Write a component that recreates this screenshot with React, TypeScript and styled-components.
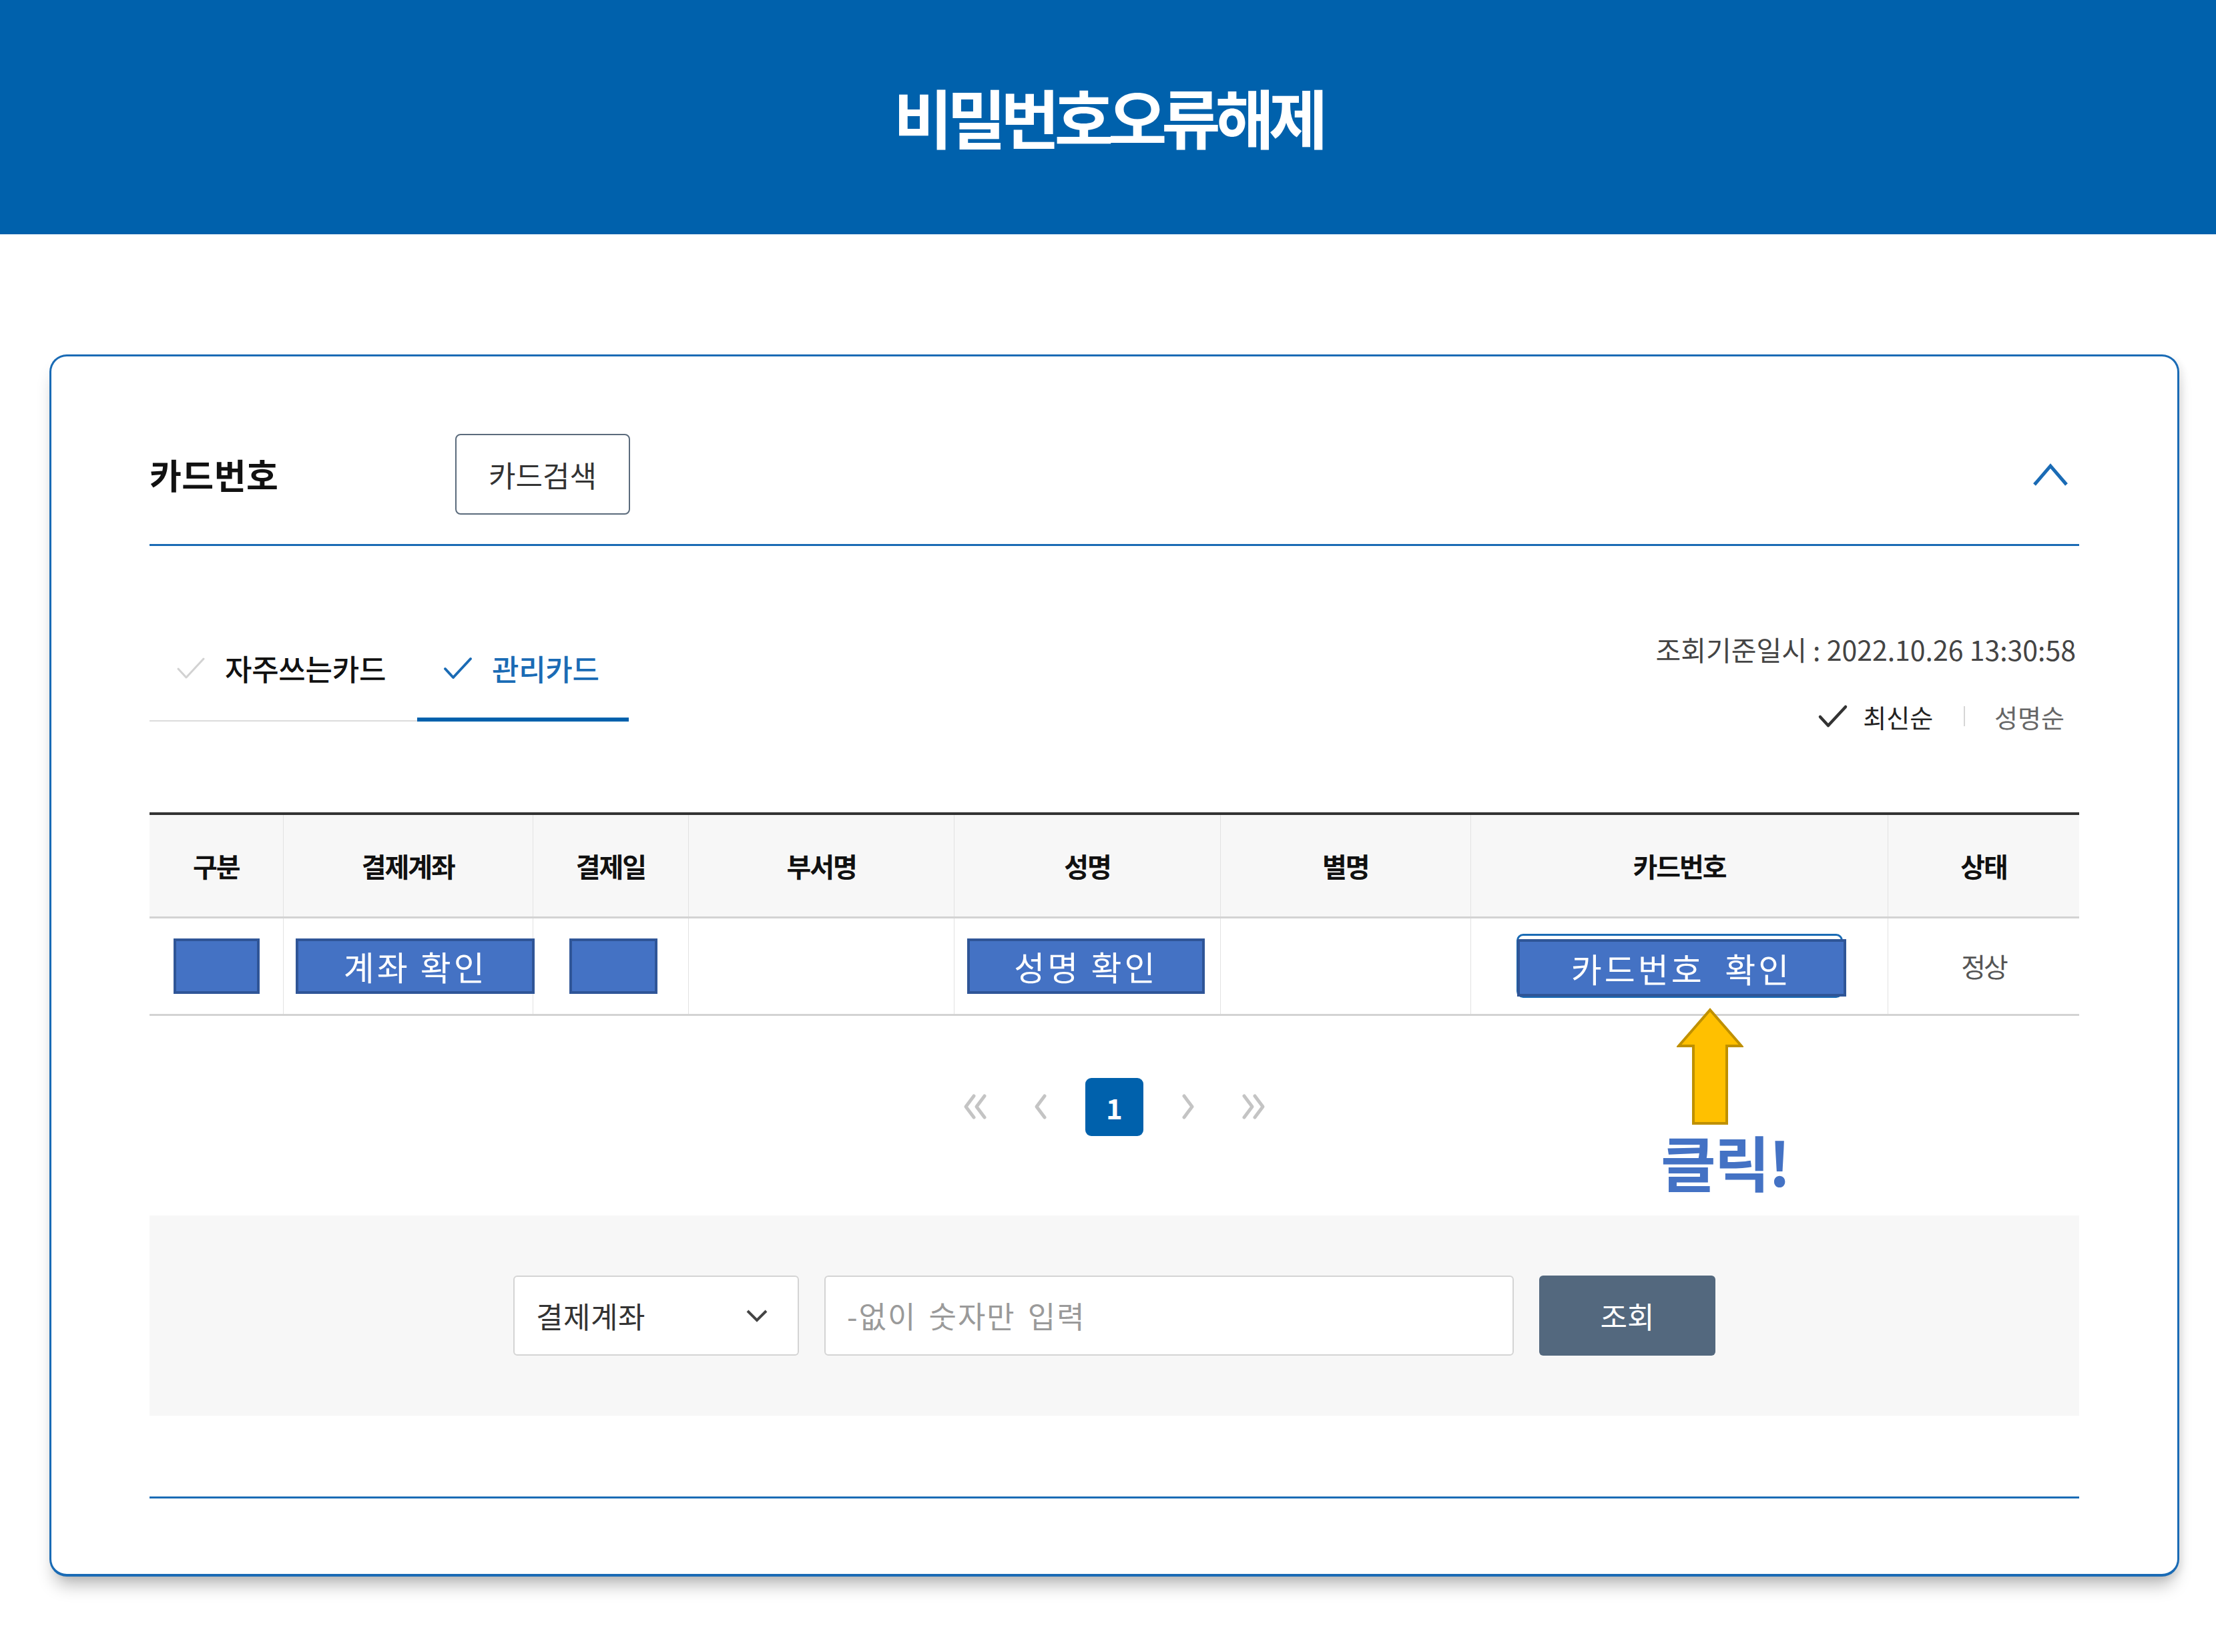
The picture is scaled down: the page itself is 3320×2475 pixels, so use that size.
import React from "react";
import styled, { createGlobalStyle } from "styled-components";

const FONT = `"Noto Sans CJK KR", "Noto Sans", sans-serif`;
const BLUE = "#0061ac";
const LINE_BLUE = "#1a6bb5";

const Global = createGlobalStyle`
  html, body { margin: 0; padding: 0; background: #fff; }
  body { font-family: ${FONT}; width: 3320px; min-height: 2475px; color: #222; }
  * { box-sizing: border-box; }
`;

const Page = styled.div`
  width: 3320px;
  min-height: 2475px;
  background: #fff;
  display: flex;
  flex-direction: column;
`;

const Header = styled.header`
  height: 351px;
  background: ${BLUE};
  display: flex;
  align-items: center;
  justify-content: center;
`;

const Title = styled.h1`
  margin: 0;
  color: #fff;
  font-size: 96px;
  font-weight: 700;
  letter-spacing: -8px;
  line-height: 1;
  padding-bottom: 4px;
`;

const Main = styled.main`
  padding: 180px 0 0 74px;
`;

const Card = styled.section`
  position: relative;
  width: 3191px;
  border: 3px solid ${LINE_BLUE};
  border-bottom-width: 4px;
  border-radius: 26px;
  background: #fff;
  padding: 116px 147px 113px 147px;
  box-shadow: 0 20px 26px -8px rgba(0, 0, 0, 0.28), 6px 4px 10px rgba(0, 0, 0, 0.06);
`;

const SectionHead = styled.div`
  display: flex;
  align-items: center;
  height: 168px;
  padding-bottom: 44px;
  border-bottom: 3px solid ${LINE_BLUE};
`;

const Label = styled.h2`
  margin: 0;
  width: 458px;
  font-size: 52px;
  font-weight: 700;
  letter-spacing: 0.5px;
  color: #111;
`;

const OutlineButton = styled.button`
  width: 262px;
  height: 121px;
  border: 2px solid #5b6b7c;
  border-radius: 8px;
  background: #fff;
  font-family: ${FONT};
  font-size: 44px;
  letter-spacing: 0px;
  color: #333;
  padding: 0;
`;

const Collapse = styled.span`
  margin-left: auto;
  margin-right: 15px;
  display: flex;
`;

const ToolRow = styled.div`
  display: flex;
  justify-content: space-between;
  align-items: flex-start;
  padding-top: 129px;
`;

const Tabs = styled.div`
  display: flex;
  margin-top: 24px;
`;

const Tab = styled.div<{ $active?: boolean; $w: number; $pl: number }>`
  width: ${(p) => p.$w}px;
  height: 110px;
  display: flex;
  align-items: flex-start;
  gap: 28px;
  padding-left: ${(p) => p.$pl}px;
  border-bottom: ${(p) => (p.$active ? `6px solid ${BLUE}` : "2px solid #dcdcdc")};
  font-size: 44px;
  line-height: 60px;
  font-weight: 500;
  letter-spacing: -0.3px;
  color: ${(p) => (p.$active ? LINE_BLUE : "#111")};
  svg { margin-top: 10px; flex: none; }
`;

const Meta = styled.div`
  display: flex;
  flex-direction: column;
  align-items: flex-end;
`;

const DateText = styled.div`
  font-size: 41px;
  line-height: 50px;
  letter-spacing: 0px;
  color: #444;
  padding-right: 5px;
`;

const SortRow = styled.div`
  margin-top: 51px;
  display: flex;
  align-items: center;
  height: 50px;
  padding-right: 22px;
  font-size: 38px;
  letter-spacing: 0px;
`;

const SortItem = styled.span<{ $on?: boolean }>`
  display: flex;
  align-items: center;
  gap: 22px;
  color: ${(p) => (p.$on ? "#222" : "#666")};
`;

const SortSep = styled.span`
  width: 2px;
  height: 30px;
  background: #d6d6d6;
  margin: 0 44px 0 46px;
`;

const Table = styled.table`
  margin-top: 119px;
  width: 100%;
  border-collapse: collapse;
  table-layout: fixed;
`;

const HeadRow = styled.tr`
  border-top: 4px solid #333;
`;

const Th = styled.th`
  height: 155px;
  background: #f7f7f7;
  border-bottom: 3px solid #d3d3d3;
  border-left: 1px solid #e2e2e2;
  font-size: 40px;
  font-weight: 700;
  letter-spacing: -2px;
  color: #111;
  &:first-child { border-left: none; }
`;

const Td = styled.td`
  height: 146px;
  border-bottom: 3px solid #d3d3d3;
  border-left: 1px solid #e2e2e2;
  text-align: center;
  vertical-align: middle;
  font-size: 40px;
  letter-spacing: -3px;
  color: #555;
  padding: 0;
  &:first-child { border-left: none; }
`;

const Mark = styled.span<{ $w: number; $shift?: number }>`
  display: inline-flex;
  align-items: center;
  justify-content: center;
  width: ${(p) => p.$w}px;
  height: 83px;
  background: #4472c4;
  border: 4px solid #2f5597;
  color: #fff;
  font-size: 50px;
  font-weight: 400;
  letter-spacing: 4px;
  white-space: pre;
  transform: translateX(${(p) => p.$shift ?? 0}px);
  vertical-align: middle;
`;

const UnderButton = styled.span`
  position: relative;
  display: inline-block;
  width: 489px;
  height: 96px;
  border: 3px solid ${LINE_BLUE};
  border-radius: 10px;
  vertical-align: middle;
  & > ${Mark} {
    position: absolute;
    left: -2px;
    top: 5px;
    height: 86px;
  }
`;

const Pager = styled.nav`
  margin-top: 93px;
  display: flex;
  justify-content: center;
  gap: 36px;
`;

const PageArrow = styled.span`
  width: 60px;
  height: 87px;
  display: flex;
  align-items: center;
  justify-content: center;
`;

const PageNum = styled.span`
  width: 87px;
  height: 87px;
  border-radius: 9px;
  background: ${BLUE};
  color: #fff;
  font-size: 42px;
  font-weight: 700;
  display: flex;
  align-items: center;
  justify-content: center;
`;

const SearchPanel = styled.div`
  margin-top: 119px;
  height: 300px;
  background: #f7f7f7;
  display: flex;
  align-items: center;
  justify-content: center;
  gap: 38px;
`;

const SelectBox = styled.div`
  width: 428px;
  height: 120px;
  background: #fff;
  border: 2px solid #d4d4d4;
  border-radius: 6px;
  display: flex;
  align-items: center;
  justify-content: space-between;
  padding: 0 44px 0 32px;
  font-size: 44px;
  letter-spacing: 0.5px;
  color: #333;
`;

const InputBox = styled.div`
  width: 1033px;
  height: 120px;
  background: #fff;
  border: 2px solid #d4d4d4;
  border-radius: 6px;
  display: flex;
  align-items: center;
  padding-left: 32px;
  font-size: 45px;
  letter-spacing: 2px;
  word-spacing: 6px;
  color: #9a9a9a;
`;

const SolidButton = styled.button`
  width: 264px;
  height: 120px;
  border: none;
  border-radius: 6px;
  background: #53687e;
  color: #fff;
  font-family: ${FONT};
  font-size: 44px;
  letter-spacing: 0px;
  padding: 0;
`;

const BottomLine = styled.div`
  margin-top: 121px;
  border-top: 3px solid ${LINE_BLUE};
`;

const ArrowMark = styled.svg`
  position: absolute;
  left: 2435px;
  top: 976px;
`;

const ClickText = styled.span`
  position: absolute;
  left: 2411px;
  top: 1160px;
  font-size: 90px;
  line-height: 1;
  font-weight: 700;
  letter-spacing: -2px;
  color: #4472c4;
`;

const Check = ({ color, w = 46, sw = 4 }: { color: string; w?: number; sw?: number }) => (
  <svg width={w} height={40} viewBox="0 0 46 40" fill="none">
    <polyline points="4,21 16,34 42,6" stroke={color} strokeWidth={sw} strokeLinecap="round" strokeLinejoin="round" />
  </svg>
);

const ChevronLeft = ({ double }: { double?: boolean }) => (
  <svg width="50" height="44" viewBox="0 0 50 44" fill="none" stroke="#c4c4c4" strokeWidth="5" strokeLinecap="round" strokeLinejoin="round">
    {double ? (
      <>
        <polyline points="20,6 8,22 20,38" />
        <polyline points="36,6 24,22 36,38" />
      </>
    ) : (
      <polyline points="30,6 18,22 30,38" />
    )}
  </svg>
);

const ChevronRight = ({ double }: { double?: boolean }) => (
  <svg width="50" height="44" viewBox="0 0 50 44" fill="none" stroke="#c4c4c4" strokeWidth="5" strokeLinecap="round" strokeLinejoin="round">
    {double ? (
      <>
        <polyline points="14,6 26,22 14,38" />
        <polyline points="30,6 42,22 30,38" />
      </>
    ) : (
      <polyline points="20,6 32,22 20,38" />
    )}
  </svg>
);

const cols = [200, 374, 233, 398, 398, 375, 625, 286];
const heads = ["구분", "결제계좌", "결제일", "부서명", "성명", "별명", "카드번호", "상태"];

export default function App() {
  return (
    <Page>
      <Global />
      <Header>
        <Title>비밀번호오류해제</Title>
      </Header>
      <Main>
        <Card>
          <SectionHead>
            <Label>카드번호</Label>
            <OutlineButton>카드검색</OutlineButton>
            <Collapse>
              <svg width="56" height="38" viewBox="0 0 56 38" fill="none">
                <polyline points="4,34 28,6 52,34" stroke={LINE_BLUE} strokeWidth="5" />
              </svg>
            </Collapse>
          </SectionHead>

          <ToolRow>
            <Tabs>
              <Tab $w={401} $pl={39}>
                <Check color="#d2d2d2" sw={3} />
                자주쓰는카드
              </Tab>
              <Tab $active $w={317} $pl={38}>
                <Check color={LINE_BLUE} />
                관리카드
              </Tab>
            </Tabs>
            <Meta>
              <DateText>조회기준일시 : 2022.10.26 13:30:58</DateText>
              <SortRow>
                <SortItem $on>
                  <Check color="#333" w={46} sw={4.5} />
                  최신순
                </SortItem>
                <SortSep />
                <SortItem>성명순</SortItem>
              </SortRow>
            </Meta>
          </ToolRow>

          <Table>
            <colgroup>
              {cols.map((w, i) => (
                <col key={i} style={{ width: w }} />
              ))}
            </colgroup>
            <thead>
              <HeadRow>
                {heads.map((h) => (
                  <Th key={h}>{h}</Th>
                ))}
              </HeadRow>
            </thead>
            <tbody>
              <tr>
                <Td>
                  <Mark $w={129} $shift={1} />
                </Td>
                <Td>
                  <Mark $w={358} $shift={11}>계좌 확인</Mark>
                </Td>
                <Td>
                  <Mark $w={132} $shift={4} />
                </Td>
                <Td />
                <Td>
                  <Mark $w={356} $shift={-2}>성명 확인</Mark>
                </Td>
                <Td />
                <Td>
                  <UnderButton>
                    <Mark $w={493}>{"카드번호  확인"}</Mark>
                  </UnderButton>
                </Td>
                <Td>정상</Td>
              </tr>
            </tbody>
          </Table>

          <Pager>
            <PageArrow>
              <ChevronLeft double />
            </PageArrow>
            <PageArrow>
              <ChevronLeft />
            </PageArrow>
            <PageNum>1</PageNum>
            <PageArrow>
              <ChevronRight />
            </PageArrow>
            <PageArrow>
              <ChevronRight double />
            </PageArrow>
          </Pager>

          <SearchPanel>
            <SelectBox>
              결제계좌
              <svg width="34" height="22" viewBox="0 0 34 22" fill="none">
                <polyline points="3,4 17,18 31,4" stroke="#444" strokeWidth="4" />
              </svg>
            </SelectBox>
            <InputBox>-없이 숫자만 입력</InputBox>
            <SolidButton>조회</SolidButton>
          </SearchPanel>

          <BottomLine />

          <ArrowMark width="100" height="176" viewBox="0 0 100 176">
            <polygon
              points="50,3 97,57 75,57 75,173 25,173 25,57 3,57"
              fill="#ffc000"
              stroke="#bf9000"
              strokeWidth="4"
              strokeLinejoin="miter"
            />
          </ArrowMark>
          <ClickText>클릭!</ClickText>
        </Card>
      </Main>
    </Page>
  );
}
